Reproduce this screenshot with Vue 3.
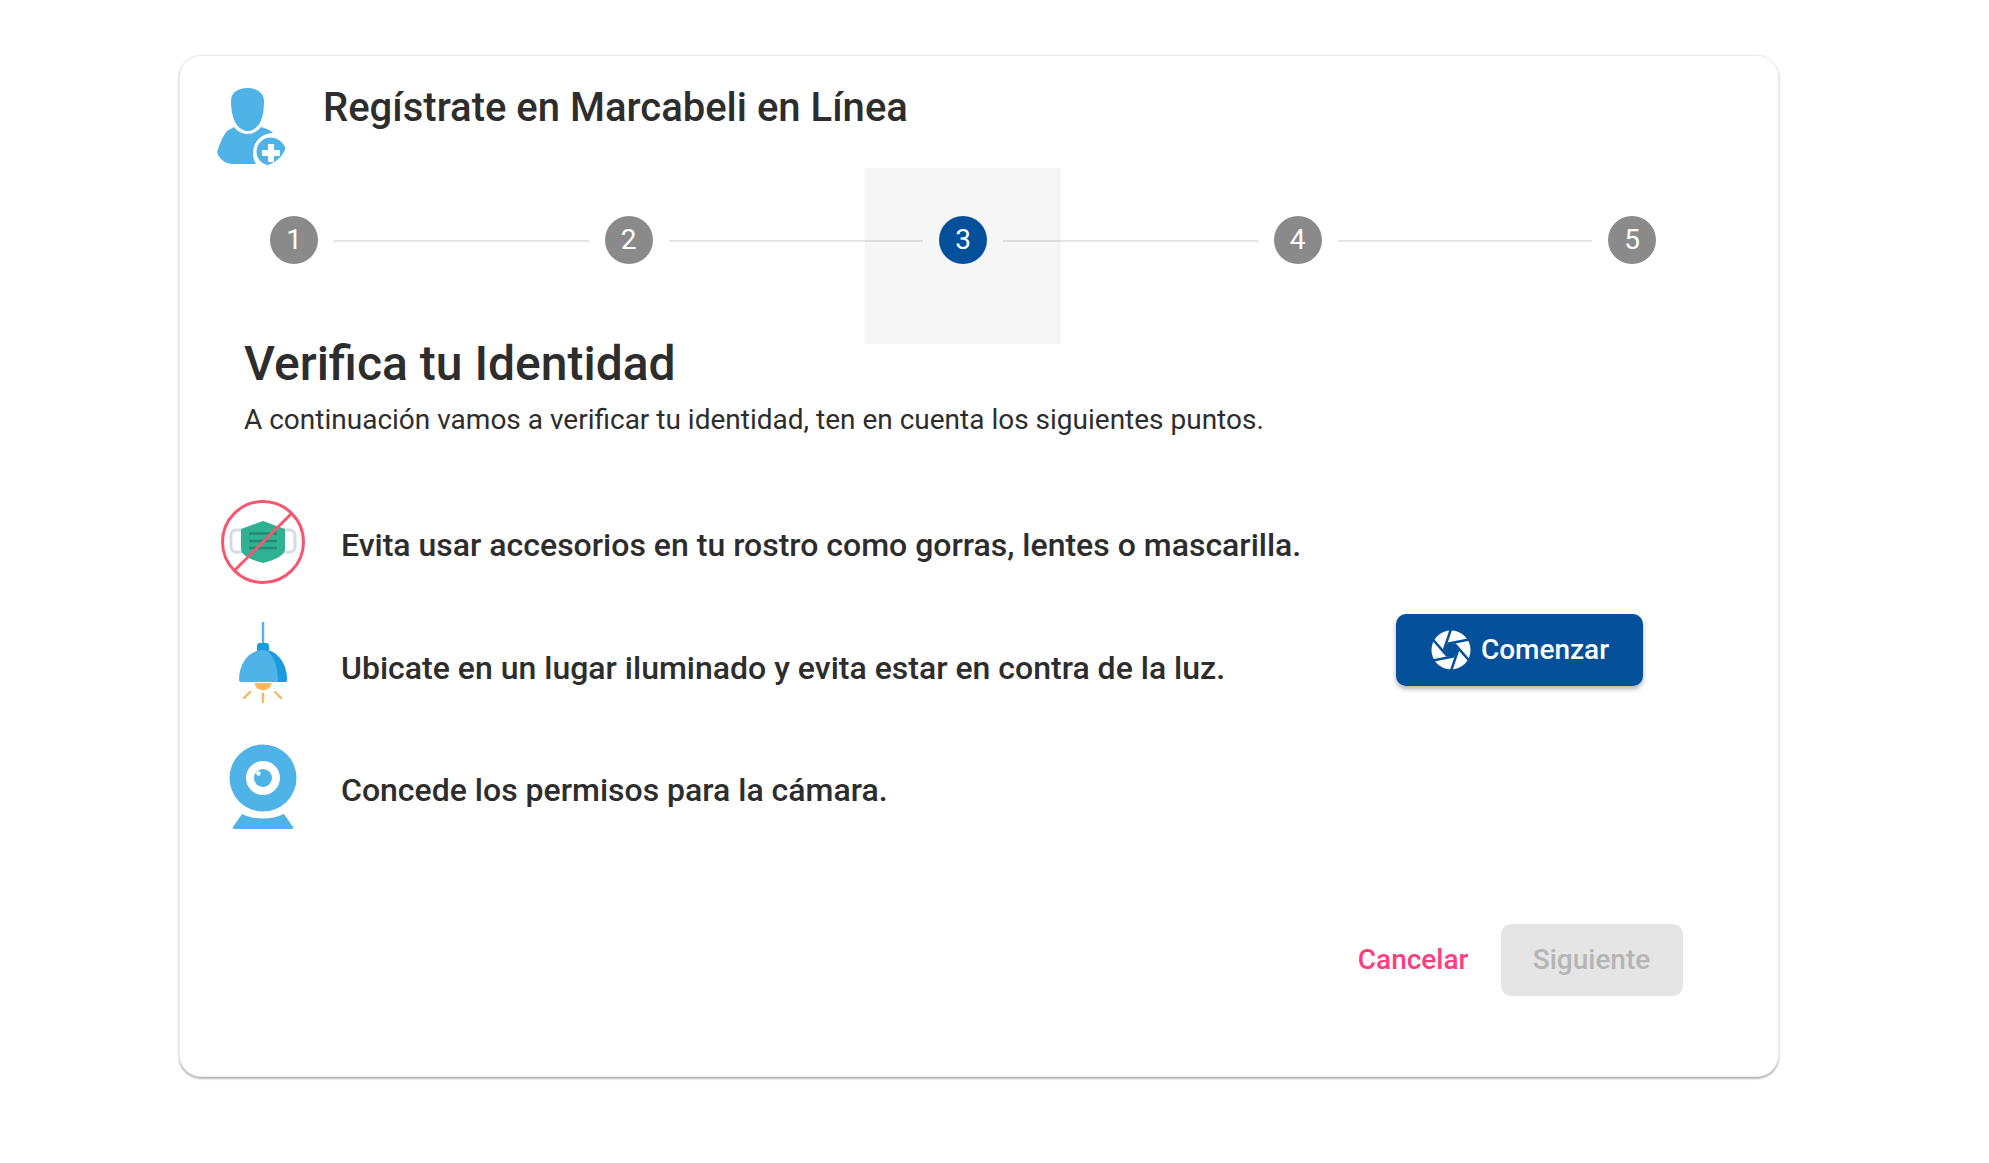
<script setup>
const steps = [1, 2, 3, 4, 5]
const blades = [0, 60, 120, 180, 240, 300]
</script>

<template>
  <div class="page">
    <section class="card">
      <header class="head">
        <svg class="user" viewBox="0 0 72 80" width="72" height="80">
          <path fill="#4fb3e8" d="M31.5 1c-10 0-16.5 5-16.5 13 0 10 2 19 6 24 3 4 7 6 10.500 6s8-2 11-6c4-5 5.500-14 5.500-24C48 6 41 1 31.500 1z" />
          <path fill="#4fb3e8" d="M18 40c3 4 8 7 13.500 7s10-3 13.500-7l6 2c3 1 5 3 6 4-10 0-20 8-20 20 0 4 1 8 3 11H16C10 77 5 73 2 68c-1-2-1-4 0-6 2-5 4-12 9-18z" />
          <path fill="#4fb3e8" stroke="#fff" stroke-width="3" d="M55 49c7 0 12 4 16 11-1 8-8 16-20 20-8-3-12-8-12-15 0-9 7-16 16-16z" />
          <path fill="#fff" d="M52 57h6v6h6v6h-6v6h-6v-6h-6v-6h6z" />
        </svg>
        <h1>Regístrate en Marcabeli en Línea</h1>
      </header>

      <div class="stepper">
        <template v-for="s in steps" :key="s">
          <div class="step" :class="{ active: s === 3 }">
            <span class="dot">{{ s }}</span>
          </div>
          <i v-if="s < 5" class="rule"></i>
        </template>
      </div>

      <div class="intro">
        <h2>Verifica tu Identidad</h2>
        <p>A continuación vamos a verificar tu identidad, ten en cuenta los siguientes puntos.</p>
      </div>

      <div class="main">
        <ul class="points">
          <li>
            <span class="ico">
              <svg viewBox="0 0 84 84" width="84" height="84">
                <rect x="10" y="30" width="64" height="22" rx="5" fill="none" stroke="#d5dbe6" stroke-width="3" />
                <path fill="#2fb193" d="M42 21l22 8v20c0 6-10 11-22 14-12-3-22-8-22-14V29z" />
                <path stroke="#238a73" stroke-width="2.4" d="M28 33.500h28M28 41h28M28 48h28" />
                <circle cx="42" cy="42" r="40.500" fill="none" stroke="#f8566e" stroke-width="3" />
                <path stroke="#f8566e" stroke-width="3" d="M71 13 13 71" />
              </svg>
            </span>
            Evita usar accesorios en tu rostro como gorras, lentes o mascarilla.
          </li>
          <li>
            <span class="ico">
              <svg viewBox="0 0 50 86" width="50" height="86">
                <path stroke="#4fb3e8" stroke-width="2.400" d="M25 0v24" />
                <rect x="19" y="21" width="12" height="10" rx="3" fill="#1a9be0" />
                <path fill="#4fb3e8" d="M25 28C11 28 1 41 1 58c0 1 1 2 2 2h44c1 0 2-1 2-2 0-17-10-30-24-30z" />
                <path fill="#1a9be0" d="M29 28c11 2 20 14 20 30 0 1-1 2-2 2h-7c0-14-3-24-11-32z" />
                <path fill="#fdb65a" d="M16.500 61h17c-1 5-4 7-8.500 7s-7.500-2-8.500-7z" />
                <path stroke="#fdb65a" stroke-width="2.400" stroke-linecap="round" d="M25 72v8M12 70l-6 6M37 70l6 6" />
              </svg>
            </span>
            Ubicate en un lugar iluminado y evita estar en contra de la luz.
          </li>
          <li>
            <span class="ico">
              <svg viewBox="0 0 70 86" width="70" height="86">
                <circle cx="35" cy="34" r="33.500" fill="#4fb3e8" />
                <circle cx="35" cy="34" r="17" fill="#fff" />
                <circle cx="35" cy="34" r="9" fill="#4fb3e8" />
                <circle cx="30.500" cy="29.500" r="2.200" fill="#fff" />
                <path fill="#4fb3e8" d="M14 70c13 6 29 6 42 0l9 13c1 1 0 2-1 2H6c-1 0-2-1-1-2z" />
              </svg>
            </span>
            Concede los permisos para la cámara.
          </li>
        </ul>
        <button class="start" type="button">
          <svg viewBox="-21 -21 42 42" width="40" height="40">
            <circle r="20.500" fill="#fff" />
            <polygon points="7.500,0 3.750,6.500 -3.750,6.500 -7.500,0 -3.750,-6.500 3.750,-6.500" fill="#05509b" />
            <g v-for="a in blades" :key="a" :transform="`rotate(${a})`">
              <line x1="7.500" y1="0" x2="0" y2="22" stroke="#05509b" stroke-width="2.600" />
            </g>
          </svg>
          Comenzar
        </button>
      </div>

      <footer class="actions">
        <button class="cancel" type="button">Cancelar</button>
        <button class="next" type="button" disabled>Siguiente</button>
      </footer>
    </section>
  </div>
</template>

<style>
html, body { background: #fff; }
</style>

<style scoped>
.page {
  min-height: 1163px;
  box-sizing: border-box;
  padding: 55px 0 0 179px;
  font-family: Roboto, "Noto Sans", sans-serif;
  color: #2d2d2d;
}
.card {
  box-sizing: border-box;
  width: 1600px;
  height: 1022px;
  background: #fff;
  border-radius: 22px;
  border: 1px solid #ececec;
  box-shadow: 0 2px 2px rgba(0, 0, 0, .28), 0 0 3px rgba(0, 0, 0, .06);
}
.head {
  display: flex;
  align-items: flex-start;
  height: 112px;
  padding: 31px 0 0 36px;
  box-sizing: border-box;
}
.user { display: block; }
h1 {
  margin: -7px 0 0 35px;
  font-size: 40px;
  line-height: 56px;
  font-weight: 500;
}
.stepper {
  display: flex;
  width: 1534px;
  height: 176px;
  margin-left: 16px;
}
.step {
  flex: 0 0 196px;
  display: flex;
  justify-content: center;
  padding-top: 48px;
  box-sizing: border-box;
}
.step.active { background: #f6f6f6; }
.dot {
  width: 48px;
  height: 48px;
  border-radius: 50%;
  background: #8a8a8a;
  color: #fff;
  font-size: 28px;
  line-height: 48px;
  text-align: center;
}
.active .dot { background: #05509b; }
.rule {
  flex: 1 1 0;
  position: relative;
  z-index: 1;
  height: 2px;
  margin: 72px -58px 0;
  background: rgba(0, 0, 0, .1);
}
.intro {
  margin-top: -8px;
  padding-left: 64px;
}
h2 {
  margin: 0;
  font-size: 48px;
  line-height: 56px;
  font-weight: 500;
}
.intro p {
  margin: 8.500px 0 0;
  font-size: 28px;
  line-height: 38px;
  color: #2d2d2d;
}
.main {
  display: flex;
  align-items: center;
  justify-content: space-between;
  width: 1462.500px;
  margin-top: 45.500px;
}
.points {
  list-style: none;
  margin: 0;
  padding: 0;
}
.points li {
  display: flex;
  align-items: center;
  height: 122.500px;
  font-size: 32px;
  font-weight: 500;
}
.ico {
  flex: 0 0 84px;
  display: flex;
  justify-content: center;
  margin: -6px 36px 0 41px;
}
.ico svg { display: block; }
.start {
  display: flex;
  align-items: center;
  gap: 10px;
  justify-content: center;
  width: 247px;
  height: 72px;
  margin-bottom: 36px;
  padding: 0 0 0 2px;
  border: 0;
  border-radius: 10px;
  background: #05509b;
  color: #fff;
  font: 500 28px Roboto, sans-serif;
  box-shadow: 0 3px 5px rgba(0, 0, 0, .3);
}
.actions {
  display: flex;
  justify-content: flex-end;
  align-items: center;
  gap: 32px;
  width: 1502.500px;
  margin-top: 72px;
}
.cancel {
  padding: 0;
  border: 0;
  background: none;
  color: #ff3d7f;
  font: 500 28px Roboto, sans-serif;
}
.next {
  width: 182px;
  height: 72px;
  border: 0;
  border-radius: 10px;
  background: #e5e5e5;
  color: #b5b5b5;
  font: 500 28px Roboto, sans-serif;
}
</style>
